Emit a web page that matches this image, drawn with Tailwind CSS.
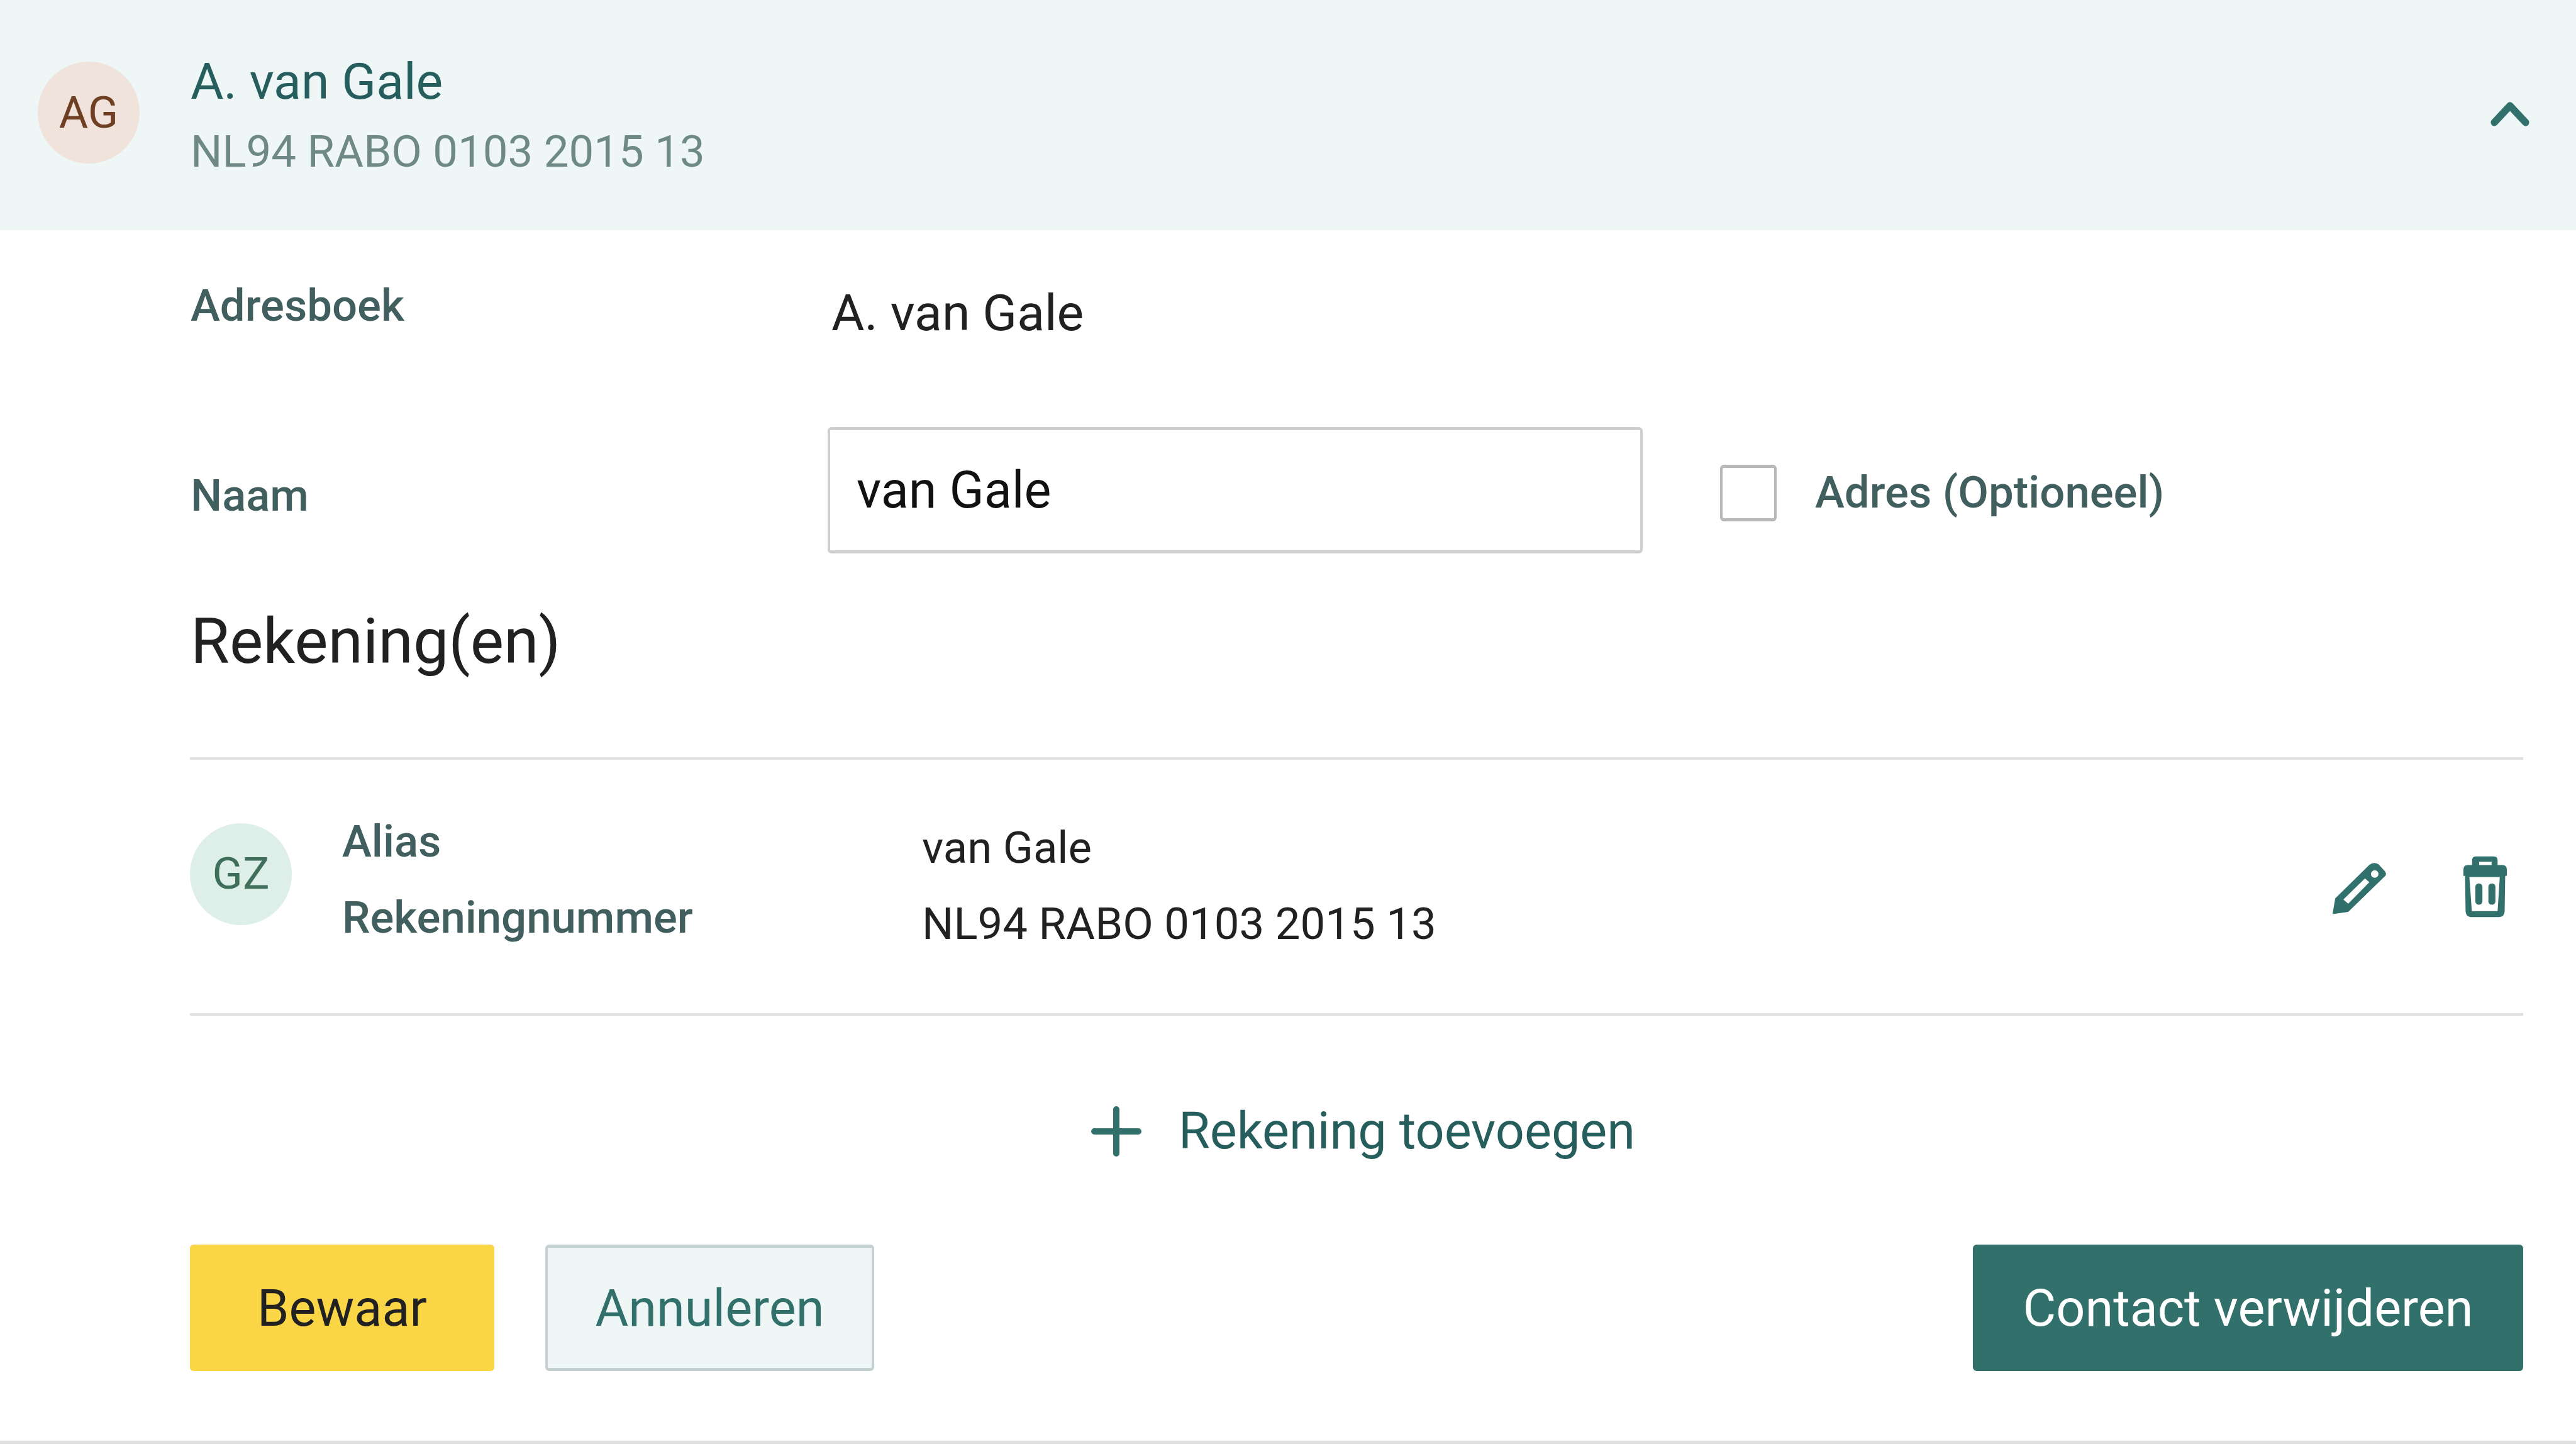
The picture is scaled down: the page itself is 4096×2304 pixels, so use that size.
<!DOCTYPE html>
<html lang="nl">
<head>
  <meta charset="UTF-8">
  <title>Contact</title>
  <script src="https://cdn.jsdelivr.net/npm/@tailwindcss/browser@4"></script>
</head>
<body class="bg-white font-[family-name:Roboto,sans-serif] text-[#212121] w-[4096px] h-[2304px] overflow-hidden">
  <!-- Header -->
  <header class="h-[366px] bg-[#eef6f6] flex items-center pl-[60px] pr-[74px]">
    <div class="w-[162px] h-[162px] -mt-[8px] rounded-full bg-[#f0e3dc] text-[#6f3f24] text-[71px] flex items-center justify-center shrink-0">AG</div>
    <div class="ml-[81px] mt-[6px] flex-1">
      <div class="text-[80.5px] leading-[110px] text-[#265d5d]">A. van Gale</div>
      <div class="text-[70.7px] leading-[112px] text-[#6f8a86]">NL94 RABO 0103 2015 13</div>
    </div>
    <svg class="w-[62px] h-[41px] -mt-[6px]" viewBox="0 0 70 46" fill="none" stroke="#31706b" stroke-width="13" stroke-linecap="round" stroke-linejoin="round"><path d="M7 39 L35 9 L63 39"/></svg>
  </header>

  <div class="pl-[303px] pr-[84px]">
    <!-- Adresboek -->
    <div class="flex items-start pt-[84px] h-[313px]">
      <div class="w-[1019px] text-[70.7px] leading-[72px] font-medium text-[#425f5f]">Adresboek</div>
      <div class="text-[80.5px] leading-[92px] mt-[2px]">A. van Gale</div>
    </div>

    <!-- Naam -->
    <div class="flex items-center h-[201px]">
      <div class="w-[1013px] mt-[17px] text-[70.7px] font-medium text-[#425f5f]">Naam</div>
      <div class="w-[1296px] h-[201px] border-x-4 border-y-[5px] border-[#cfcfcf] rounded-[6px] flex items-center pl-[42px] text-[81px] text-[#111111]">van Gale</div>
      <div class="w-[90px] h-[90px] ml-[123px] mt-[9px] border-x-4 border-y-[5px] border-[#b8b8b8] rounded-[6px]"></div>
      <div class="ml-[61px] mt-[8px] text-[70.7px] font-medium text-[#425f5f]">Adres (Optioneel)</div>
    </div>

    <h2 class="text-[100.5px] leading-[120px] mt-[80px]">Rekening(en)</h2>

    <!-- Account row -->
    <div class="mt-[124px] -ml-[1px] h-[411px] border-y-4 border-[#e0e0e0] flex items-center">
      <div class="w-[162px] h-[162px] rounded-full bg-[#ddefe8] text-[#3f6f5a] text-[71px] flex items-center justify-center shrink-0 -mt-[40px]">GZ</div>
      <div class="ml-[80px] w-[922px] text-[70.7px] font-medium text-[#425f5f] leading-[121px] -mt-[23px]">
        <div>Alias</div>
        <div>Rekeningnummer</div>
      </div>
      <div class="flex-1 text-[70.7px] leading-[121px] -mt-[3px]">
        <div>van Gale</div>
        <div>NL94 RABO 0103 2015 13</div>
      </div>
      <svg class="w-[90px] h-[86px] mr-[121px] mt-[7px]" viewBox="0 0 104 100" fill="#31706b" fill-rule="evenodd"><path d="M3 97 L8 68 L71 6 Q79 0 88 5 L100 18 Q103 22 101 26 L32 93 Z M23 70 L32 78 L71 38 L63 31 Z M74 23 a7 7 0 1 0 14 0 a7 7 0 1 0 -14 0 Z"/></svg>
      <svg class="w-[69px] h-[101px] mr-[26px]" viewBox="0 0 80 115" fill="#31706b" fill-rule="evenodd"><path d="M16 18 L16 9 Q16 2 23 2 L56 2 Q63 2 63 9 L63 18 L72 18 Q80 18 80 26 L80 38 L77 38 L76 104 Q75 114 66 114 L14 114 Q5 114 4 104 L3 38 L0 38 L0 26 Q0 18 8 18 Z M29 12 L29 18 L52 18 L52 12 Z M11 40 L15.5 103 L63 103 L67 40 Z"/><rect x="22" y="52" width="13" height="39" rx="6"/><rect x="46" y="52" width="13" height="39" rx="6"/></svg>
    </div>

    <!-- Add account -->
    <div class="flex items-center justify-center h-[364px] gap-[59px] pl-[20px] pt-[4px]">
      <svg class="w-[80px] h-[80px]" viewBox="0 0 80 80" fill="none" stroke="#31706b" stroke-width="10" stroke-linecap="round"><path d="M40 5 V75 M5 40 H75"/></svg>
      <span class="text-[81px] text-[#265d5d]">Rekening toevoegen</span>
    </div>

    <!-- Buttons -->
    <div class="flex text-[81px] -ml-[1px]">
      <button class="w-[484px] h-[201px] pt-[2px] bg-[#fad545] rounded-[6px]">Bewaar</button>
      <button class="w-[523px] h-[201px] pt-[2px] ml-[81px] bg-[#eef6f6] border-x-4 border-y-[5px] border-[#c4d1d1] rounded-[6px] text-[#31706b]">Annuleren</button>
      <button class="w-[875px] h-[201px] pt-[2px] ml-auto bg-[#31706b] text-white rounded-[6px]">Contact verwijderen</button>
    </div>
  </div>
  <div class="h-[5px] bg-[#e0e0e0] mt-[111px]"></div>
</body>
</html>
